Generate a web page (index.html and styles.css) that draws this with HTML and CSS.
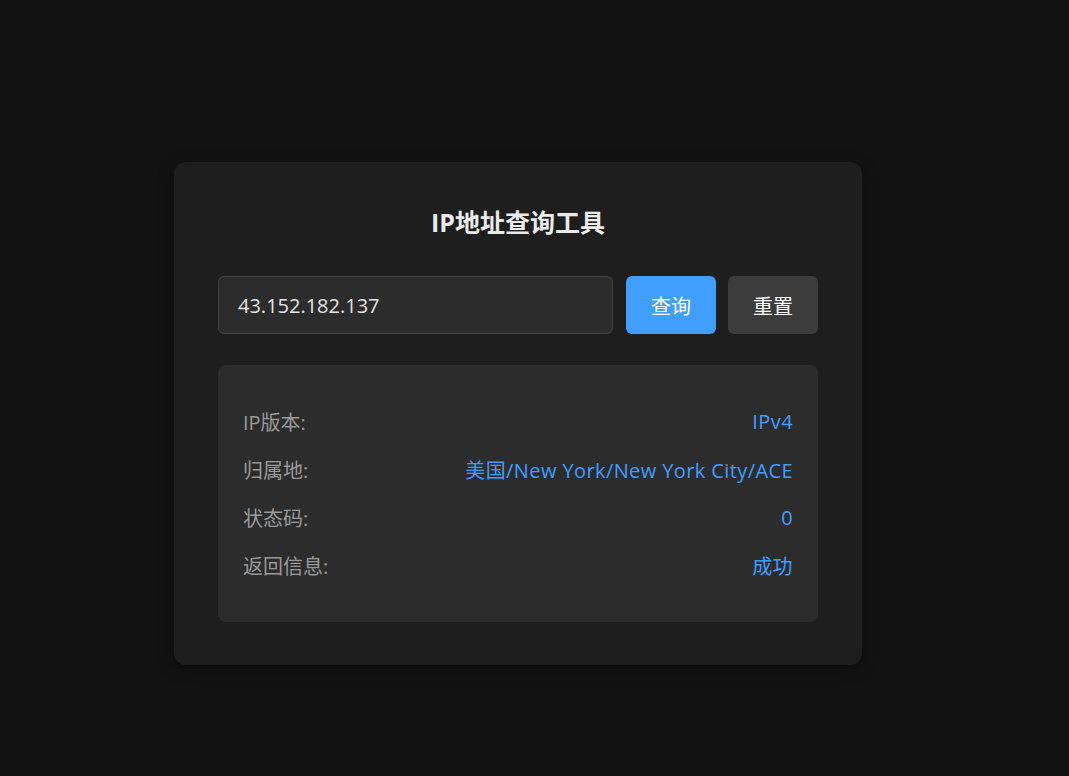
FILE: index.html
```html
<!DOCTYPE html>
<html lang="zh-CN">
<head>
<meta charset="utf-8">
<title>IP地址查询工具</title>
<link rel="stylesheet" href="styles.css">
</head>
<body>
<main class="page">
  <section class="card">
    <h1 class="title">IP地址查询工具</h1>
    <div class="search">
      <input class="ip-input" type="text" value="43.152.182.137">
      <button class="btn btn-primary">查询</button>
      <button class="btn btn-secondary">重置</button>
    </div>
    <div class="result">
      <div class="row"><span class="label">IP版本:</span><span class="value">IPv4</span></div>
      <div class="row"><span class="label">归属地:</span><span class="value">美国/New York/New York City/ACE</span></div>
      <div class="row"><span class="label">状态码:</span><span class="value">0</span></div>
      <div class="row"><span class="label">返回信息:</span><span class="value">成功</span></div>
    </div>
  </section>
</main>
</body>
</html>
```
FILE: styles.css
```css
* { box-sizing: border-box; }
html, body {
  margin: 0;
  height: 100%;
  background: #121212;
  font-family: "Open Sans", "Noto Sans CJK SC", sans-serif;
}
.page {
  min-height: 100%;
  display: flex;
  justify-content: center;
  padding: 162px 33px 0 0;
}
.card {
  width: 688px;
  height: 503px;
  background: #1e1e1e;
  border-radius: 12px;
  padding: 44px 44px 43px;
  box-shadow: 0 4px 16px rgba(0,0,0,0.35);
}
.title {
  margin: 0 0 38px;
  height: 32px;
  line-height: 32px;
  text-align: center;
  font-size: 25px;
  font-weight: 700;
  color: #ebebeb;
}
.search {
  display: flex;
  gap: 12px;
  height: 58px;
  margin-bottom: 31px;
}
.ip-input {
  flex: 1;
  min-width: 0;
  height: 58px;
  margin-right: 1px;
  background: #2c2c2c;
  border: 1px solid #434343;
  border-radius: 6px;
  padding: 0 19px;
  font-family: inherit;
  font-size: 20px;
  color: #e4e4e4;
  outline: none;
}
.btn {
  width: 90px;
  height: 58px;
  border: none;
  border-radius: 6px;
  font-family: inherit;
  font-size: 20px;
  color: #ffffff;
  cursor: pointer;
}
.btn-primary { background: #409eff; }
.btn-secondary { background: #3c3c3c; }
.result {
  background: #2c2c2c;
  border-radius: 8px;
  height: 257px;
  padding: 32px 25px 32px;
}
.row {
  display: flex;
  justify-content: space-between;
  align-items: center;
  height: 48px;
  font-size: 20px;
}
.label { color: #9a9a9a; }
.value { color: #409eff; letter-spacing: 0.4px; }
```
